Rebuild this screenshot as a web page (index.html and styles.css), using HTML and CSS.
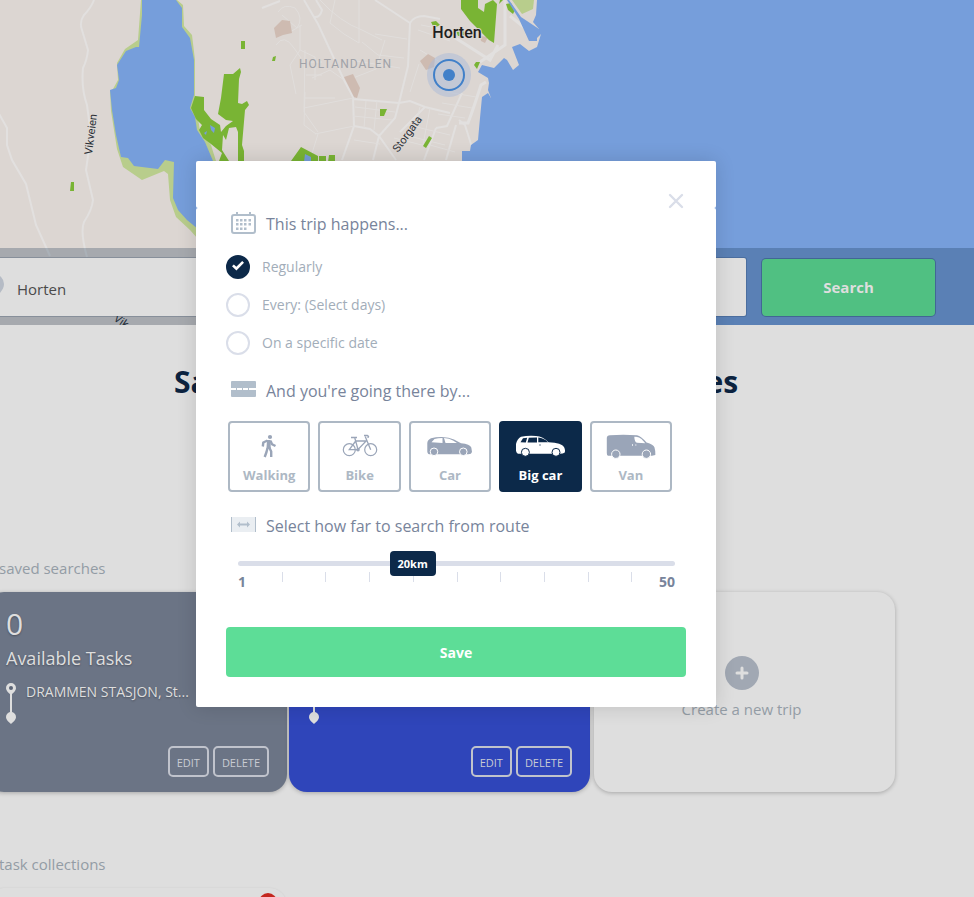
FILE: index.html
```html
<!DOCTYPE html>
<html lang="en">
<head>
<meta charset="utf-8">
<title>Trip planner</title>
<link rel="stylesheet" href="styles.css">
</head>
<body>
<main class="page">
  <section class="hero">
    <svg class="map" viewBox="0 0 974 325" preserveAspectRatio="xMinYMin slice" aria-hidden="true">
      <rect width="974" height="325" fill="#dcd6d2"/>
      <g fill="none" stroke="#e2e0df" stroke-width="2">
        <path d="M94 0Q91 8 84 15Q79 22 82 30L88 50Q87 60 83 68Q81 88 87 105L91 135L86 170L93 200Q92 210 84 222Q80 232 87 257"/>
        <path d="M-2 112L7 128V145L12 160L26 184L36 225L50 256"/>
        <path d="M304 0L318 24L344 80L353 97L354 126L342 160M353 99L399 103L410 101L425 107L450 113M354 126L370 129L379 136L396 160M379 136L395 118L399 103L408 66L410 23Q414 16 424 16L440 19M379 136L373 160M375 0L410 23M262 8L280 1M316 0L322 10Q320 18 314 17"/>
        <path d="M425 107L400 132M436 128L424 160M456 125L446 160M436 128L447 126L462 93M476 160L465 125L459 120"/>
        <path d="M480 62L505 45V0M510 16L520 24L532 34M454 37L490 60L498 45M459 123H468Q473 110 481 85L486 82" stroke-width="3"/>
      </g>
      <g fill="none" stroke="#e1dedc" stroke-width="1">
        <path d="M300 25V50L315 57V80M300 50L290 65L296 94M305 92L304 125L316 134M312 78L330 70L344 80M335 0L330 23L344 34L359 43V0M320 0Q340 22 362 30L382 40M348 80L376 69L385 40M362 42L378 55L404 58M375 34L407 39M350 60L400 68M304 108L353 98M315 134L354 126M318 134L310 160M420 50L440 62M421 25L452 31M418 30L450 41M419 64L410 92M420 107L414 130M408 125L450 135M405 135L445 145M430 108L423 145M355 107L395 112M366 101L364 128M377 101L374 130M353 116L392 120M354 140L380 144M394 138L430 147M430 145L455 152M447 92L476 97M442 103L472 108M438 114L465 118"/>
        <path d="M278 12Q284 3 295 8Q304 18 297 28L282 15M275 28L290 32L302 25M305 50L304 112L318 132M306 75H322M305 98H335M309 62H322M276 45Q284 33 294 48L301 58"/>
      </g>
      <g fill="#cebbb1">
        <path d="M274 28L282 20L290 21L292 33L283 35L276 38Z"/>
        <path d="M344 77L353 74L360 88L357 98L354 97Z"/>
        <path d="M420 61L428 54L435 58L434 67L426 70Z"/>
        <path d="M480 36L488 37L485 43L481 41Z"/>
      </g>
      <path fill="#b8cd8c" d="M141 0L138 40L125 49L117 63L118 80L113 89L110 91L111 111L117 149L123 167L142 180L164 171L168 174L170 200L176 217L190 230L198 239L216 161L211 145L200 131L197 112L195 95L195 60L192 35L184 26L183 5L177 0Z"/>
      <path fill="#769edb" d="M142 0L142 15L139 47L136 47L126 51L117 65L119 80L116 88L110 90L112 110L116 135L121 157L128 158L134 166L158 169L165 160L174 162L173 198L178 210L187 220L198 229L213 161L205 142L197 130L195 117L190 108L194 95V60L190 38L182 27L182 8L176 0Z"/>
      <g fill="#79b434">
        <path d="M195 96L204 97L204 110L211 119L220 125L221 132L226 126L233 121L226 120L218 114L221 98L224 74L233 74L240 68L241 72L239 79L238 103L242 104L247 101L249 105L245 110L242 145L244 151V162H238V132L236 127L229 128L226 140L223 135L222 150L229 161H219L222 153L211 144L203 138L199 130L202 125L196 119L191 108Z"/>
        <path d="M241 41H245V49H241ZM273 57L276 56L275 61H272ZM71 182H74V191H70ZM291 161L301 147L318 156V162ZM319 156H326V162H319ZM329 155H335V162H328Z"/>
        <path d="M461 0H478V8L484 12L485 4L493 0L497 4L494 43L489 40L478 29L470 21L461 9ZM506 4L511 3L515 10L513 14L508 10ZM500 0H503L499 4ZM431 22L436 21L440 25L434 28ZM380 109L387 109L384 116H380ZM423 146L429 136L432 138L426 148ZM474 65L476 62L480 62L477 69ZM455 28H464V36H458Z"/>
      </g>
      <g fill="#769edb">
        <path d="M204 133L207 131L206 135ZM210 125L215 128L214 133L211 130ZM305 154L311 157V162H304Z"/>
        <path d="M537 0H974V325H490L462 161V151H470L471 145L478 140L480 118L482 97L488 93L491 98L488 90L489 83L488 78L478 72L482 65L494 68L504 58L507 60L513 70L519 65L512 47L520 44L529 51L537 47L541 34L537 38V41H529L524 30L519 19L507 0H509L521 17L539 29L533 22L536 15Z"/>
      </g>
      <path fill="#b8cd8c" d="M512 0H534L533 9L522 14Z"/>
      <circle cx="449" cy="75" r="22" fill="#a9b9d8" fill-opacity=".5"/>
      <circle cx="449" cy="75" r="15" fill="none" stroke="#4180c9" stroke-width="2"/>
      <circle cx="449" cy="75" r="6" fill="#4180c9"/>
      <text class="map-town" x="457" y="38" text-anchor="middle">Horten</text>
      <text class="map-area" x="299" y="68">HOLTANDALEN</text>
      <text class="map-road" transform="translate(92 155) rotate(-83)">Vikveien</text>
      <text class="map-road" transform="translate(398 153) rotate(-54)">Storgata</text>
      <text class="map-road" transform="translate(113 320) rotate(34)">Vik</text>
    </svg>
    <form class="search-bar">
      <label class="field field-from">
        <svg width="20" height="26" viewBox="0 0 20 26" aria-hidden="true"><path d="M10 0A10 10 0 0 1 20 10C20 16 14 21 10 26C6 21 0 16 0 10A10 10 0 0 1 10 0Z" fill="#b5bbc5"/></svg>
        <input type="text" value="Horten" aria-label="From">
      </label>
      <label class="field field-to"><input type="text" aria-label="To"></label>
      <button class="search-btn" type="button">Search</button>
    </form>
  </section>

  <h1 class="headline">Save your rides and see your matches</h1>

  <h2 class="list-title">saved searches</h2>
  <section class="cards">
    <article class="card card-slate">
      <p class="count">0</p>
      <p class="tasks">Available Tasks</p>
      <div class="route">
        <svg width="10" height="42" viewBox="0 0 10 42" aria-hidden="true"><path d="M5 5V34" stroke="#dedede" stroke-width="2"/><path d="M5 0A5 5 0 0 1 10 5C10 8 7 10 5 12C3 10 0 8 0 5A5 5 0 0 1 5 0ZM5 29A5 5 0 0 1 10 34C10 37 7 39 5 41C3 39 0 37 0 34A5 5 0 0 1 5 29Z" fill="#dedede"/><circle cx="5" cy="5" r="2" fill="#5b6475"/></svg>
        <span>DRAMMEN STASJON, St...</span>
      </div>
      <div class="actions"><button type="button">EDIT</button><button type="button">DELETE</button></div>
    </article>
    <article class="card card-blue">
      <div class="route">
        <svg width="10" height="42" viewBox="0 0 10 42" aria-hidden="true"><path d="M5 5V34" stroke="#dedede" stroke-width="2"/><path d="M5 29A5 5 0 0 1 10 34C10 37 7 39 5 41C3 39 0 37 0 34A5 5 0 0 1 5 29Z" fill="#dedede"/></svg>
      </div>
      <div class="actions"><button type="button">EDIT</button><button type="button">DELETE</button></div>
    </article>
    <article class="card card-new">
      <svg width="34" height="34" viewBox="0 0 34 34" aria-hidden="true"><circle cx="17" cy="17" r="17" fill="#a1a8b3"/><path d="M17 12V22M12 17H22" stroke="#dedede" stroke-width="3" stroke-linecap="round"/></svg>
      <a href="#">Create a new trip</a>
    </article>
  </section>

  <h2 class="list-title list-title-next">task collections</h2>
  <section class="collection"><span class="badge"></span></section>
</main>

<div class="overlay">
  <section class="modal" role="dialog" aria-label="Trip settings">
    <header class="modal-head">
      <button class="close" type="button" aria-label="Close"><svg width="16" height="16" viewBox="0 0 16 16"><path d="M2 2L14 14M14 2L2 14" stroke="#dadee9" stroke-width="2.400" stroke-linecap="round"/></svg></button>
    </header>
    <form class="modal-body">
      <h3 class="question">
        <svg width="25" height="24" viewBox="0 0 25 24" aria-hidden="true"><g fill="none" stroke="#b1becb" stroke-width="2"><rect x="1" y="4" width="23" height="18" rx="2"/><path d="M6 1V5M19 1V5"/></g><path d="M5 8h2.500v2.500h-2.500zM9 8h2.500v2.500h-2.500zM13 8h2.500v2.500h-2.500zM17.500 8h2.500v2.500h-2.500zM5 12h2.500v2.500h-2.500zM9 12h2.500v2.500h-2.500zM13 12h2.500v2.500h-2.500zM17.500 12h2.500v2.500h-2.500zM5 16.500h2.500v2.500h-2.500zM9 16.500h2.500v2.500h-2.500zM13 16.500h2.500v2.500h-2.500z" fill="#b1becb"/></svg>
        This trip happens...
      </h3>
      <div class="choices">
        <label class="choice"><input type="radio" name="when" checked>Regularly</label>
        <label class="choice"><input type="radio" name="when">Every: (Select days)</label>
        <label class="choice"><input type="radio" name="when">On a specific date</label>
      </div>

      <h3 class="question">
        <svg width="25" height="20" viewBox="0 0 25 20" aria-hidden="true"><rect y="1" width="25" height="16" rx="1" fill="#b1becb"/><path d="M0 9H5M6 9H11M12 9H17M18 9H25" stroke="#fff" stroke-width="2"/></svg>
        And you're going there by...
      </h3>
      <div class="vehicles">
        <button type="button" class="vehicle">
          <svg width="56" height="28" viewBox="0 0 56 28" aria-hidden="true"><circle cx="29" cy="4" r="2.1" fill="#9aa5b8"/><path d="M26 7h3.700v8l-4.200.5z" fill="#9aa5b8"/><path d="M26.500 7.500L22.300 9.500L21.800 13.500M29.500 7.800L31 11.200L34.500 13M26.500 15L25.500 19L23.700 24M28.300 14.500L30.200 18.500V24" fill="none" stroke="#9aa5b8" stroke-width="2.400" stroke-linejoin="round"/></svg>
          Walking
        </button>
        <button type="button" class="vehicle">
          <svg width="56" height="28" viewBox="0 0 56 28" aria-hidden="true"><g fill="none" stroke="#9aa5b8"><circle cx="17.300" cy="16.700" r="6" stroke-width="1.200"/><circle cx="38.700" cy="16.700" r="6" stroke-width="1.200"/><path d="M22.800 5L26 16.500L34.200 8L23.700 8L17.300 16.700H26M33.200 3.500L38.700 16.700" stroke-width="1.300"/><path d="M19 4.400H25M32 2.600H35.500Q37.500 3.500 35.500 4.600" stroke-width="1.500"/></g><circle cx="26" cy="16.800" r="1.800" fill="#9aa5b8"/></svg>
          Bike
        </button>
        <button type="button" class="vehicle">
          <svg width="56" height="28" viewBox="0 0 56 28" aria-hidden="true"><path d="M7 21.300Q5 20.500 5.300 17V10Q5.500 7 9 5.300Q14 3.900 20 4Q27 4 32 6.500L39 10.200Q48 11 49.300 14.500L50 19Q49.500 21.300 46.500 21.300Z" fill="#9aa5b8"/><path d="M9.500 9.200L12.500 6Q16 5.200 20.500 5.100V10ZM22 5.100Q27.500 5.300 31 7.500L35 10H23.500Z" fill="#fff"/><g fill="#9aa5b8" stroke="#fff"><circle cx="12" cy="18.800" r="3.800"/><circle cx="41.300" cy="18.800" r="3.800"/></g></svg>
          Car
        </button>
        <button type="button" class="vehicle is-active" aria-pressed="true">
          <svg width="56" height="28" viewBox="0 0 56 28" aria-hidden="true"><path d="M6 20.700Q3.700 19.500 4 16V11Q5 6 9 3.700Q16 2.400 24 3Q31 3.300 36.500 9.300Q50 10 52 14Q53.800 18 52.500 19.800Q51 20.700 48 20.700Z" fill="#fff"/><path d="M8.500 9.300L11 5.300L15.200 4.800L13.800 9.500ZM15.500 9.500L16.800 4.800L25 4.600V9.500ZM26.300 4.600Q32 5 36 9.300H26.300Z" fill="#0c2949"/><path d="M27 12H29" stroke="#0c2949" stroke-width=".6"/><g fill="#fff" stroke="#0c2949"><circle cx="13.400" cy="19.300" r="4"/><circle cx="44" cy="19.300" r="4"/></g></svg>
          Big car
        </button>
        <button type="button" class="vehicle">
          <svg width="56" height="28" viewBox="0 0 56 28" aria-hidden="true"><path d="M5 22.700Q3.800 22.500 3.800 20V5Q3.800 2.500 7 2.200Q20 1.500 34 2.200Q38 3 43.500 9.500Q50.500 11.500 51.500 14.500Q52.500 18 52.300 22L49 22.700Z" fill="#9aa5b8"/><path d="M31.300 3.700Q36 3.500 38.500 6L42.300 10.200L34 9.800Q31.500 9 31.300 3.700Z" fill="#fff"/><path d="M29.500 11V13M32 12H33.500" stroke="#fff" stroke-width=".7"/><g fill="#9aa5b8" stroke="#fff"><circle cx="12.800" cy="21.200" r="4.200"/><circle cx="43.400" cy="21.200" r="4.200"/></g></svg>
          Van
        </button>
      </div>

      <h3 class="question">
        <svg width="25" height="20" viewBox="0 0 25 20" aria-hidden="true"><path d="M0 2H25V17H0Z" fill="#eaeef2"/><path d="M.5 2V17M24.500 2V17" stroke="#b1becb"/><path d="M6 9.500L9 6.500V8.500H16V6.500L19 9.500L16 12.500V10.500H9V12.500Z" fill="#b1becb"/></svg>
        Select how far to search from route
      </h3>
      <div class="range">
        <input type="range" min="1" max="50" value="20" aria-label="Distance from route in kilometres">
        <output class="range-value">20km</output>
        <div class="scale">
          <span class="scale-min">1</span>
          <i></i><i></i><i></i><i></i><i></i><i></i><i></i><i></i><i></i>
          <span class="scale-max">50</span>
        </div>
      </div>
      <button class="save" type="button">Save</button>
    </form>
  </section>
</div>
</body>
</html>
```
FILE: styles.css
```css
* { box-sizing: border-box; }

body {
  margin: 0;
  min-height: 100vh;
  overflow: hidden;
  background: #dedede;
  color: #0c2340;
  font-family: "Open Sans", "Noto Sans", sans-serif;
}

h1, h2, h3, p { margin: 0; }
button, input { font-family: inherit; }

.page { height: 100vh; overflow: hidden; }

/* Map and search */
.hero {
  display: grid;
  height: 325px;
}
.map {
  grid-area: 1 / 1;
  width: 100%;
  height: 325px;
}
.map-town {
  font: 500 16px Roboto, sans-serif;
  fill: #1f1f1f;
  stroke: #dcd6d2;
  stroke-width: 2;
  paint-order: stroke;
}
.map-area {
  font: 400 12px Roboto, sans-serif;
  letter-spacing: 1px;
  fill: #a0a2a8;
}
.map-road {
  font: 400 11px Roboto, sans-serif;
  fill: #2c3137;
}

.search-bar {
  grid-area: 1 / 1;
  align-self: end;
  display: flex;
  gap: 16px;
  height: 77px;
  padding: 10px 39px 8px 0;
  margin-left: -16px;
  background: rgba(13, 42, 75, .26);
}
.field {
  display: flex;
  align-items: center;
  flex: 1;
  height: 58px;
  background: #dedede;
  border-radius: 2px;
  box-shadow: 0 0 0 1px rgba(13, 42, 75, .2);
}
.field-from { gap: 13px; }
.field-from svg { flex: none; }
.field input {
  flex: 1;
  min-width: 0;
  padding: 4px 0 0;
  border: 0;
  background: none;
  color: #4a4a4a;
  font-size: 15px;
}
.search-btn {
  width: 173px;
  height: 57px;
  margin-top: 1px;
  padding: 0 0 2px;
  border: 0;
  border-radius: 4px;
  background: #50c082;
  box-shadow: 0 0 0 1px rgba(13, 42, 75, .3);
  color: #dedede;
  font-size: 15px;
  font-weight: 700;
}

/* Saved searches */
.headline {
  margin: 37px 62px 0 0;
  font-size: 30px;
  line-height: 40px;
  text-align: center;
  white-space: nowrap;
}
.list-title {
  margin: 154px 0 12px -1px;
  color: #939ca5;
  font-size: 15px;
  font-weight: 400;
  line-height: 24px;
}
.list-title-next { margin-top: 60px; }

.cards {
  display: grid;
  grid-template-columns: repeat(3, 301px);
  gap: 2px;
  margin-left: -14px;
}
.card {
  display: flex;
  flex-direction: column;
  height: 200px;
  padding: 12px 18px 15px 20px;
  border-radius: 18px;
  box-shadow: 0 1px 4px rgba(0, 0, 0, .25);
  color: #dedede;
}
.card-slate { background: #6b7485; text-shadow: 0 1px 2px rgba(0, 0, 0, .3); }
.card-blue { background: #2f45ba; }
.count { font-size: 30px; line-height: 40px; }
.tasks { margin-top: 2px; font-size: 18px; line-height: 24px; }
.route {
  display: flex;
  gap: 10px;
  margin-top: 13px;
  font-size: 14px;
  line-height: 18px;
}
.card-blue .route { margin-top: 79px; }
.actions {
  display: flex;
  justify-content: flex-end;
  gap: 4px;
  margin-top: auto;
}
.actions button {
  height: 31px;
  padding: 2px 7px 0;
  border: 2px solid #c0c3cc;
  border-radius: 5px;
  background: none;
  color: #c9ccd3;
  font-size: 11px;
}
.card-new {
  align-items: center;
  padding: 64px 18px 15px 12px;
  gap: 7px;
  margin: 0 -2px 0 2px;
  background: #dedede;
}
.card-new a {
  color: #939ca5;
  font-size: 15px;
  line-height: 24px;
  text-decoration: none;
}

.collection {
  display: flex;
  justify-content: flex-end;
  width: 301px;
  height: 120px;
  margin-left: -14px;
  padding: 5px 10px;
  border-radius: 18px;
  box-shadow: 0 0 2px rgba(0, 0, 0, .08);
}
.badge {
  width: 18px;
  height: 18px;
  border-radius: 50%;
  background: #c4271f;
}

/* Dialog */
.overlay {
  position: fixed;
  inset: 0 62px 0 0;
  display: flex;
  justify-content: center;
  align-items: flex-start;
  padding-top: 161px;
}
.modal {
  position: relative;
  width: 520px;
  border-radius: 2px;
  box-shadow: 0 0 20px rgba(0, 0, 0, .14);
}
.modal-head {
  height: 47px;
  border-radius: 2px;
  background: #fff;
}
.close {
  position: absolute;
  top: 32px;
  right: 32px;
  display: flex;
  padding: 0;
  border: 0;
  background: none;
}
.modal-body {
  padding: 4px 30px 30px;
  border-radius: 2px;
  background: #fff;
}
.question {
  display: flex;
  align-items: center;
  gap: 10px;
  height: 24px;
  padding-left: 5px;
  color: #78849b;
  font-size: 16px;
  font-weight: 400;
  line-height: 24px;
}
.question svg { flex: none; margin-bottom: 2px; }

.choices {
  display: grid;
  gap: 14px;
  margin: 19px 0 24px;
}
.choice {
  display: flex;
  align-items: center;
  gap: 12px;
  color: #a2adb9;
  font-size: 14px;
  line-height: 24px;
}
.choice input {
  appearance: none;
  display: grid;
  place-items: center;
  width: 24px;
  height: 24px;
  margin: 0;
  border: 2px solid #dadee9;
  border-radius: 50%;
}
.choice input:checked {
  border-color: #0c2949;
  background: #0c2949;
}
.choice input:checked::before {
  content: "";
  width: 12px;
  height: 10px;
  margin-bottom: 2px;
  background: #fff;
  clip-path: polygon(0 52%, 15% 36%, 36% 58%, 85% 0, 100% 18%, 37% 96%);
}

.vehicles {
  display: flex;
  gap: 8px;
  margin: 18px 14px 22px 2px;
}
.vehicle {
  display: flex;
  flex: 1;
  flex-direction: column;
  align-items: center;
  gap: 4px;
  height: 71px;
  padding: 10px 0 5px;
  border: 2px solid #adb8c4;
  border-radius: 4px;
  background: #fff;
  color: #adb8c4;
  font-size: 13px;
  font-weight: 700;
  line-height: 20px;
}
.vehicle.is-active {
  border-color: #0c2949;
  background: #0c2949;
  color: #fff;
}

.range {
  position: relative;
  margin: 13px 11px 0 12px;
}
.range input {
  appearance: none;
  position: relative;
  z-index: 1;
  display: block;
  width: 100%;
  height: 25px;
  margin: 0;
  background: none;
}
.range input::-webkit-slider-runnable-track {
  height: 5px;
  border-radius: 3px;
  background: #dadee9;
}
.range input::-webkit-slider-thumb {
  appearance: none;
  width: 46px;
  height: 25px;
  margin-top: -10px;
  border-radius: 4px;
  background: #0c2949;
}
.range-value {
  position: absolute;
  z-index: 2;
  top: 0;
  left: calc((100% - 46px) * 19 / 49);
  width: 46px;
  color: #fff;
  font-size: 11px;
  font-weight: 700;
  line-height: 25px;
  text-align: center;
  pointer-events: none;
}
.scale {
  display: grid;
  grid-template-columns: repeat(10, 1fr);
  margin-top: -4px;
  color: #78849b;
  font-size: 14px;
  font-weight: 700;
  line-height: 20px;
}
.scale span { grid-row: 1; align-self: start; }
.scale-min { grid-column: 1; }
.scale-max { grid-column: 10; justify-self: end; }
.scale i {
  grid-row: 1;
  width: 1px;
  height: 10px;
  background: #dadee9;
}
.scale i:nth-of-type(1) { grid-column: 2; }
.scale i:nth-of-type(2) { grid-column: 3; }
.scale i:nth-of-type(3) { grid-column: 4; }
.scale i:nth-of-type(4) { grid-column: 5; }
.scale i:nth-of-type(5) { grid-column: 6; }
.scale i:nth-of-type(6) { grid-column: 7; }
.scale i:nth-of-type(7) { grid-column: 8; }
.scale i:nth-of-type(8) { grid-column: 9; }
.scale i:nth-of-type(9) { grid-column: 10; }

.save {
  width: 100%;
  height: 50px;
  margin-top: 35px;
  border: 0;
  border-radius: 4px;
  background: #5ddd97;
  color: #fff;
  font-size: 14px;
  font-weight: 700;
}
```
